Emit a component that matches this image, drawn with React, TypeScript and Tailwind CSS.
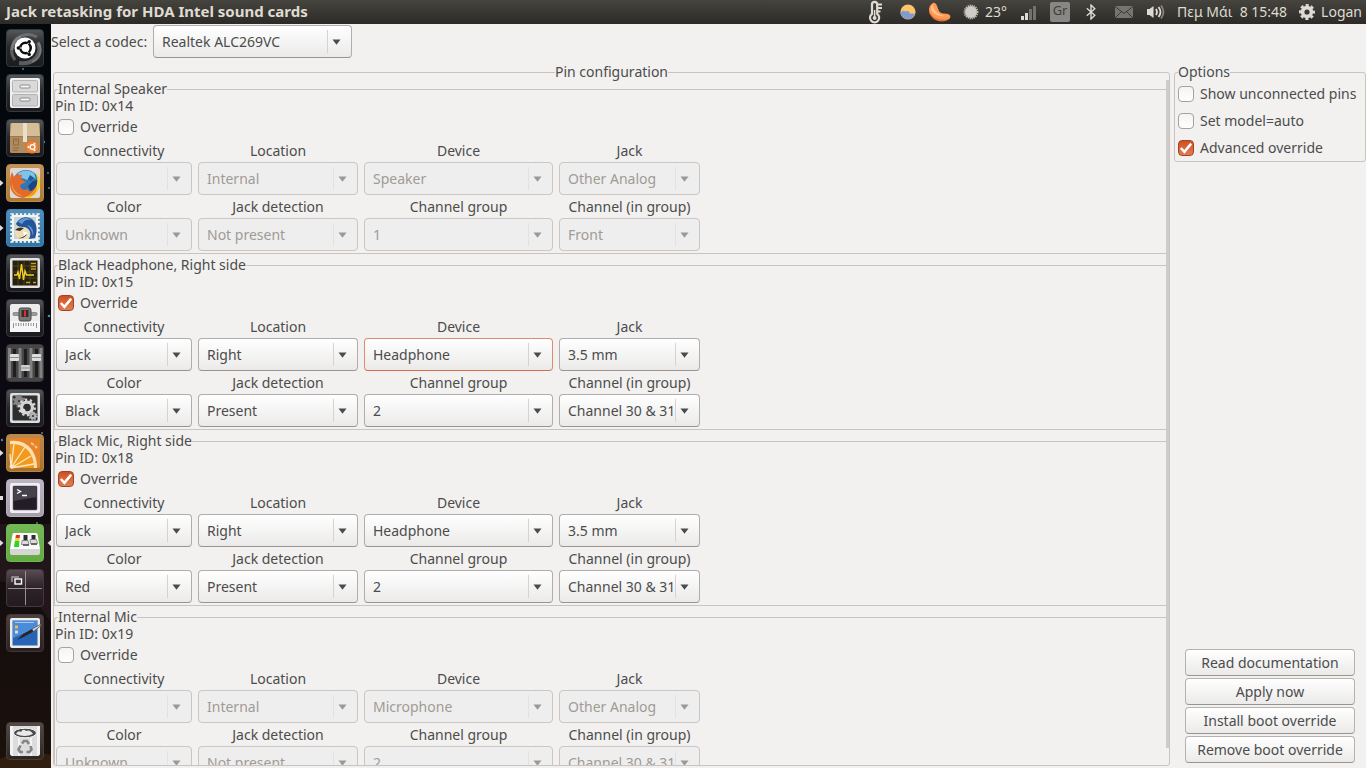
import React, { useState } from 'react';

type Pin = {
  id: string;
  name: string;
  override: boolean;
  values: string[]; // same order as FIELDS
};

const FIELDS = [
  { label: 'Connectivity', options: ['', 'Jack', 'Internal', 'Not connected'] },
  { label: 'Location', options: ['Internal', 'Right', 'Left', 'Front', 'Rear'] },
  { label: 'Device', options: ['Speaker', 'Headphone', 'Microphone', 'Line in', 'Line out'] },
  { label: 'Jack', options: ['Other Analog', '3.5 mm', 'Unknown'] },
  { label: 'Color', options: ['Unknown', 'Black', 'Red', 'Green', 'Blue'] },
  { label: 'Jack detection', options: ['Not present', 'Present'] },
  { label: 'Channel group', options: ['1', '2', '3', '4'] },
  { label: 'Channel (in group)', options: ['Front', 'Channel 30 & 31', 'Center/LFE', 'Back'] },
];

const PINS: Pin[] = [
  {
    id: '0x14',
    name: 'Internal Speaker',
    override: false,
    values: ['', 'Internal', 'Speaker', 'Other Analog', 'Unknown', 'Not present', '1', 'Front'],
  },
  {
    id: '0x15',
    name: 'Black Headphone, Right side',
    override: true,
    values: ['Jack', 'Right', 'Headphone', '3.5 mm', 'Black', 'Present', '2', 'Channel 30 & 31'],
  },
  {
    id: '0x18',
    name: 'Black Mic, Right side',
    override: true,
    values: ['Jack', 'Right', 'Headphone', '3.5 mm', 'Red', 'Present', '2', 'Channel 30 & 31'],
  },
  {
    id: '0x19',
    name: 'Internal Mic',
    override: false,
    values: ['', 'Internal', 'Microphone', 'Other Analog', 'Unknown', 'Not present', '2', 'Channel 30 & 31'],
  },
];

/* ---------- Controls ---------- */

const Combo: React.FC<{
  id: string;
  options: string[];
  value: string;
  disabled?: boolean;
  active?: boolean;
}> = ({ id, options, value, disabled, active }) => (
  <div className="relative h-[33px]">
    <select
      id={id}
      defaultValue={value}
      disabled={disabled}
      className={
        'block h-full w-full appearance-none rounded-[4px] border pl-2 pr-6 opacity-100 outline-none ' +
        (disabled
          ? 'border-[#c9c6c3] bg-[#eeeeee] text-[#a09b96]'
          : active
            ? 'border-[#e08b6c] border-b-[#cf6f4e] bg-linear-to-b from-white to-[#ebeae9] text-[#4c4c4c]'
            : 'border-[#b0adab] border-b-[#979492] bg-linear-to-b from-white to-[#ebeae9] text-[#4c4c4c]')
      }
    >
      {options.map((option) => (
        <option key={option}>{option}</option>
      ))}
    </select>
    <div
      className={
        'pointer-events-none absolute inset-y-[5px] right-0 flex w-[25px] items-center border-l pl-1 pt-px ' +
        (disabled ? 'border-[#e4e2e1] text-[#9c9893]' : 'border-[#d5d2d0] text-[#4c4c4c]')
      }
    >
      <svg width="9" height="6" viewBox="0 0 9 6">
        <path d="M.5.4h8L4.500 5.800z" fill="currentColor" />
      </svg>
    </div>
  </div>
);

const CheckBox: React.FC<{
  label: string;
  checked: boolean;
  onChange: (checked: boolean) => void;
}> = ({ label, checked, onChange }) => (
  <label className="flex items-center gap-1.5">
    <span className="relative size-4">
      <input
        type="checkbox"
        checked={checked}
        onChange={(e) => onChange(e.target.checked)}
        className="peer block size-4 appearance-none rounded-[4px] border border-[#a5a2a0] bg-linear-to-b from-[#f4f4f4] to-white checked:border-[#a8431f] checked:from-[#cf4f20] checked:to-[#e07c56]"
      />
      <svg
        className="pointer-events-none absolute inset-0 hidden peer-checked:block"
        width="16"
        height="16"
        viewBox="0 0 16 16"
      >
        <path d="M2.800 8l3.600 3.800L13.200 3.600" fill="none" stroke="#fff" strokeWidth="2.500" />
      </svg>
    </span>
    {label}
  </label>
);

const PinFrame: React.FC<{ pin: Pin }> = ({ pin }) => {
  const [override, setOverride] = useState<boolean>(pin.override);

  return (
    <fieldset className="mb-0.5 min-w-0 rounded-tl-[3px] border border-r-0 border-[#c8c4c1] pb-0.5">
      <legend className="ml-[3px] leading-[18px]">{pin.name}</legend>
      <p className="leading-4">Pin ID: {pin.id}</p>
      <div className="flex h-[25px] items-center pl-[3px]">
        <CheckBox label="Override" checked={override} onChange={setOverride} />
      </div>
      <div className="grid grid-cols-[136px_160px_189px_141px] gap-x-1.5 pl-px">
        {FIELDS.map((field, i) => {
          const id = `pin-${pin.id}-${i}`;
          return (
            <div key={id}>
              <label htmlFor={id} className="block text-center leading-[23px]">
                {field.label}
              </label>
              <Combo
                id={id}
                options={field.options}
                value={pin.values[i]}
                disabled={!override}
                active={pin.id === '0x15' && field.label === 'Device'}
              />
            </div>
          );
        })}
      </div>
    </fieldset>
  );
};

const PushButton: React.FC<{ children: React.ReactNode }> = ({ children }) => (
  <button
    type="button"
    className="h-[27px] rounded-[4px] border border-[#b5b2b0] border-b-[#979492] bg-linear-to-b from-white to-[#ebeae9] leading-none"
  >
    {children}
  </button>
);

/* ---------- Top panel ---------- */

const TopPanel = () => (
  <header className="flex h-6 items-center bg-linear-to-b from-[#45443e] to-[#2c2b28] pl-1.5 pr-1 text-[#dfdbd2]">
    <h1 className="pb-0.5 text-[15px] leading-5 font-bold">Jack retasking for HDA Intel sound cards</h1>
    <div className="ml-auto flex items-center">
      {/* thermometer */}
      <svg width="16" height="24" viewBox="0 0 16 24" fill="none">
        <path d="M4 4.500a2.600 2.600 0 0 1 5.200 0V14a4.600 4.600 0 1 1-5.200 0z" stroke="#dfdbd2" strokeWidth="2.200" />
        <path d="M6.600 10v8" stroke="#dfdbd2" strokeWidth="1.600" />
        <circle cx="6.600" cy="18" r="2" fill="#dfdbd2" />
        <path d="M10 4.500h4M10 8h4M10 11.500h2.500" stroke="#dfdbd2" strokeWidth="2" />
      </svg>
      {/* sun behind cloud */}
      <svg className="ml-4" width="16" height="16" viewBox="0 0 16 16">
        <circle cx="8" cy="8" r="7.600" fill="#fbc66b" />
        <path d="M.5 9.500C1 7 3.500 6 5.500 7.500 7.500 6 10 8 10.500 10c2-.8 3.500-.5 4.600 0A7.700 7.700 0 0 1 .5 9.500z" fill="#7f9bd0" />
      </svg>
      {/* clementine slice */}
      <svg className="ml-3" width="23" height="22" viewBox="0 0 23 22">
        <path d="M5 2C1 4 0 9 2 13c4 8 13 9 19 5 2-1 2-4-1-5-3-.5-7 0-9-3C10 8 9 4 8 3 7 2 6 1.500 5 2z" fill="#ff9850" />
        <path d="M5 3c0 6 5 12 15 12-5 1-15 0-17-7 0-2 1-4 2-5z" fill="#ffc091" />
        <path d="M1 9c2 8 10 11 20 9-6 4-15 2-19-5-1-1-1-3-1-4z" fill="#ef6a2c" />
      </svg>
      {/* weather */}
      <svg className="ml-3" width="16" height="16" viewBox="0 0 16 16">
        <circle cx="8" cy="8" r="6" fill="#cfccc6" />
        <circle cx="8" cy="8" r="6.400" fill="none" stroke="#c2bfb9" strokeWidth="2" strokeDasharray="1.200 .8" />
      </svg>
      <span className="ml-1.5 w-[22px] pb-0.5">23°</span>
      {/* signal */}
      <svg className="ml-3.5" width="15" height="15" viewBox="0 0 15 15">
        <path d="M0 11h3v4H0zM4 8h3v7H4z" fill="#dfdbd2" />
        <path d="M8 4h3v11H8zM12 1h3v14h-3z" fill="#74726c" />
      </svg>
      <span className="ml-3.5 flex size-5 items-center justify-center rounded-[2px] bg-[#888785] pb-0.5 text-[13px] text-[#403f3a]">
        Gr
      </span>
      {/* bluetooth */}
      <svg className="ml-4" width="10" height="16" viewBox="0 0 10 16" fill="none" stroke="#dfdbd2" strokeWidth="1.400">
        <path d="M.8 4.300l8 7L5 15V1l3.800 3.700-8 7" />
      </svg>
      {/* mail */}
      <svg className="ml-[19px]" width="18" height="12" viewBox="0 0 18 12">
        <path d="M0 0h18v12H0z" fill="#777571" />
        <path d="M0 .5l9 7 9-7M0 12l6.500-6.500M18 12l-6.500-6.500" fill="none" stroke="#3a3934" strokeWidth="1" />
      </svg>
      {/* volume */}
      <svg className="ml-3.5" width="18" height="16" viewBox="0 0 18 16" fill="none">
        <path d="M0 5h2.500L6.500 2v12l-4-3H0z" fill="#dfdbd2" />
        <path d="M9 5q2 3 0 6M11.500 3q4 5 0 10" stroke="#dfdbd2" strokeWidth="1.800" />
        <path d="M14 1.500q5 6.500 0 13" stroke="#8d8a84" strokeWidth="1.600" />
      </svg>
      <span className="ml-3 whitespace-pre pb-0.5">Πεμ Μάι  8 15:48</span>
      {/* session gear */}
      <svg className="ml-3" width="16" height="16" viewBox="0 0 16 16" fill="none" stroke="#dfdbd2">
        <circle cx="8" cy="8" r="4.400" strokeWidth="3.600" />
        <circle cx="8" cy="8" r="6.800" strokeWidth="2.400" strokeDasharray="3.100 2.240" strokeDashoffset="1.550" />
      </svg>
      <span className="ml-1.5 pb-0.5">Logan</span>
    </div>
  </header>
);

/* ---------- Launcher ---------- */

const DashIcon = () => (
  <>
    <g fill="none" stroke="#9a9a9a">
      <path d="M6 21C6 8 20 2 31 8" strokeWidth="3" opacity=".45" />
      <path d="M32 14c5 12-5 22-19 20" strokeWidth="4" opacity=".5" />
      <path d="M9 31C2 22 7 11 15 8" strokeWidth="3" opacity=".5" />
      <path d="M26 33c9-3 11-13 6-20" strokeWidth="2" opacity=".5" />
    </g>
    <circle cx="19" cy="19" r="10.500" fill="#fff" />
    <circle cx="19.500" cy="19" r="5.200" fill="none" stroke="#0c0c0c" strokeWidth="2.600" />
    <path d="M19.500 19L11 19M19.500 19l4.300-7.400M19.500 19l4.300 7.400" stroke="#fff" strokeWidth="1" />
    <circle cx="19.500" cy="19" r="3.600" fill="#fff" />
    <circle cx="12.300" cy="19" r="1.700" fill="#0c0c0c" />
    <circle cx="23.200" cy="12.600" r="1.700" fill="#0c0c0c" />
    <circle cx="23.200" cy="25.400" r="1.700" fill="#0c0c0c" />
  </>
);

const FilesIcon = () => (
  <>
    <rect x="4" y="4" width="30" height="30" rx="2" fill="#f0f0f0" />
    <rect x="6.500" y="6.500" width="25" height="11.500" rx="1" fill="#dadada" stroke="#b5b5b5" />
    <rect x="6.500" y="20.500" width="25" height="11.500" rx="1" fill="#cfcfcf" stroke="#b0b0b0" />
    <rect x="14" y="11" width="10" height="3" rx="1" fill="#f6f6f6" stroke="#8a8a8a" />
    <rect x="14" y="24" width="10" height="3" rx="1" fill="#f6f6f6" stroke="#8a8a8a" />
  </>
);

const SoftwareIcon = () => (
  <>
    <rect x="4" y="4" width="30" height="30" rx="1.500" fill="#b08b60" />
    <path d="M5.500 4h27L34 17H4z" fill="#d5bd98" />
    <path d="M4 17h30v1H4z" fill="#8f6f48" opacity=".6" />
    <path d="M17 4h4v19h-4z" fill="#ecdfc8" />
    <path d="M7.500 20h5v6h-5zM9 22h2M7 29h6M7 31.500h5" fill="none" stroke="#8d6a40" />
    <circle cx="26" cy="28" r="6.300" fill="#ee8436" stroke="#d66f26" strokeWidth=".6" />
    <circle cx="26.500" cy="28" r="2.400" fill="none" stroke="#fff" strokeWidth="1.300" />
    <circle cx="22.500" cy="28" r="1" fill="#fff" />
    <circle cx="28.500" cy="24.700" r="1" fill="#fff" />
    <circle cx="28.500" cy="31.300" r="1" fill="#fff" />
  </>
);

const FirefoxIcon = () => (
  <>
    <rect x="4" y="4" width="30" height="30" rx="2" fill="#dfd8d4" />
    <circle cx="20" cy="19.500" r="13.500" fill="#2f78b8" />
    <path d="M12 9q8-5 16 0l2 6-5-3-4 4-5-2-5 1z" fill="#7fc4e4" />
    <path d="M22 22l5-5 4-1v7l-6 6z" fill="#1a4585" />
    <path d="M24 11l4 3-3 3-3-2z" fill="#1f5a9e" />
    <path d="M6 8l2 5c2-3 5-3 8-2l-1 4 5 3-6 3c0 4 4 6 8 4 0 4 5 3 9-4 0 7-5 13-12 13C9 34 3 27 4 17c0-4 1-7 2-9z" fill="#e36a2a" />
    <path d="M6 18c0 6 4 12 11 14-8 0-12-7-11-14z" fill="#f4a04b" />
    <path d="M29 8c8 7 7 20-5 26H17c8-2 13-8 14-14 1-4 0-8-2-12z" fill="#f8d22e" />
    <path d="M20 33c6-2 9-6 11-11 0 7-4 11-11 11z" fill="#ee9222" />
  </>
);

const ThunderbirdIcon = () => (
  <>
    <rect x="6" y="6" width="26" height="26" fill="#f4f3ee" />
    <rect x="5.500" y="5.500" width="27" height="27" fill="none" stroke="#f4f3ee" strokeWidth="2.500" strokeDasharray="2.400 1.750" />
    <rect x="8" y="8" width="22" height="22" fill="#c6d6da" />
    <path d="M10 15C13 8 22 6 27 11c5 5 4 13 2 18l-6 1c3-6 1-11-5-12-3 0-6 0-8-3z" fill="#25539a" />
    <path d="M12 13c4-5 10-5 14-2-5-1-8 0-10 4zM21 16c5 1 7 6 6 11-1-5-3-8-6-11z" fill="#5c9bd4" />
    <path d="M9 20c3-3 8-3 12 0 4 3 4 8 0 10h-9c-2-3-4-7-3-10z" fill="#ecdcb8" />
    <path d="M9 21c3-3 6-3 9-2l-4 3zM12 29c4 0 7-2 9-5-1 4-4 6-9 5z" fill="#3a2e22" />
    <path d="M17 22l5 2-4 3z" fill="#fff" />
  </>
);

const MonitorIcon = () => (
  <>
    <rect x="4" y="4" width="30" height="30" rx="2" fill="#e4e3e0" />
    <rect x="6.500" y="6.500" width="25" height="25" fill="#262012" />
    <path d="M7 12h24M7 18h24M7 24h24M12 7v24M18 7v24M24 7v24" stroke="#6b5714" strokeWidth=".6" />
    <path d="M8 21h3l1-3 1.500 7 2-15 2 16 1.500-9 1.500 4H28" fill="none" stroke="#f1cf26" strokeWidth="1.400" />
    <path d="M25 9.500h5M25 12.500h5M25 15h5M20 28.500h4M27 28.500h3" stroke="#c99c22" strokeWidth="1.400" />
  </>
);

const DimmerIcon = () => (
  <>
    <rect x="4" y="5" width="30" height="28" rx="2" fill="#ececec" />
    <path d="M4 22h30v11H4z" fill="#f6f6f6" />
    <rect x="7" y="13.500" width="24" height="3" rx="1" fill="#9c9c9c" stroke="#757575" strokeWidth=".7" />
    <rect x="13" y="9" width="12" height="13" rx="2" fill="#777" stroke="#4b4b4b" />
    <rect x="15.500" y="11" width="7" height="7" fill="#2f2f2f" />
    <path d="M19 11.500v6" stroke="#e02d2d" strokeWidth="2" />
    <path d="M7.500 24v5M10 24v3M12.500 24v3M15 24v3M17.500 24v3M20 24v3M22.500 24v3M25 24v3M27.500 24v3M30.500 24v5" stroke="#8a8a8a" strokeWidth=".9" />
  </>
);

const MixerIcon = () => (
  <>
    <rect x="1" y="1" width="36" height="36" rx="3" fill="#474747" />
    <path d="M14 4v30M25 4v30M3.500 4v30M35 4v30" stroke="#9b9b9b" strokeWidth="3" opacity=".7" />
    <path d="M8.500 5v28M19.500 5v28M30.500 5v28" stroke="#1e1e1e" strokeWidth="3" />
    <rect x="4" y="10" width="9" height="7" rx="1" fill="#dedede" />
    <rect x="15" y="21" width="9" height="6" rx="1" fill="#cfcfcf" />
    <rect x="26" y="10" width="9" height="7" rx="1" fill="#dedede" />
    <path d="M4 13.500h9M15 24h9M26 13.500h9" stroke="#8b8b8b" strokeWidth="1" />
  </>
);

const SettingsIcon = () => (
  <>
    <rect x="4" y="4" width="30" height="30" rx="2" fill="#dedede" />
    <rect x="6.500" y="6.500" width="25" height="25" rx="1" fill="#2e2e2e" />
    <g fill="none">
      <circle cx="13" cy="12" r="3" strokeWidth="4" stroke="#858585" />
      <circle cx="13" cy="12" r="5.500" strokeWidth="2" strokeDasharray="2.200 2.120" stroke="#858585" />
      <circle cx="21" cy="18.500" r="5.400" strokeWidth="3.200" stroke="#d4d4d4" />
      <circle cx="21" cy="18.500" r="7.700" strokeWidth="2.600" strokeDasharray="2.400 2.440" stroke="#d4d4d4" />
      <circle cx="27" cy="27" r="2.200" strokeWidth="2.400" stroke="#b0b0b0" />
      <circle cx="27" cy="27" r="3.800" strokeWidth="1.600" strokeDasharray="1.500 1.480" stroke="#b0b0b0" />
    </g>
    <circle cx="17" cy="22" r="2.500" fill="#dcdcdc" />
  </>
);

const ClementineIcon = () => (
  <>
    <rect x="4" y="4" width="30" height="30" rx="1.500" fill="#e8832a" />
    <path d="M4 7c17-2 27 10 27 27H4z" fill="#fce0b0" />
    <path d="M4 10c15-1 24 9 24 24H4z" fill="#f39a1e" />
    <path d="M5 34L8 10M5 34L19 13M5 34l20-12M5 34l23-4M5 34L4 20" stroke="#fde8c4" strokeWidth="1.300" />
    <circle cx="5.500" cy="32.500" r="2" fill="#fde8c4" />
    <path d="M25 9l3 2M29 12l2 2" stroke="#fbc888" strokeWidth="2" />
  </>
);

const TerminalIcon = () => (
  <>
    <rect x="4" y="4" width="30" height="30" rx="2" fill="#f1eff4" />
    <rect x="7" y="7" width="24" height="24" rx="1" fill="#231d2a" stroke="#6d6874" strokeWidth=".6" />
    <path d="M7.500 7.500h23V18L7.500 22z" fill="#45424c" />
    <path d="M11 10.500l3.500 2-3.500 2M16 16.500h5" fill="none" stroke="#fff" strokeWidth="1.400" />
  </>
);

const RetaskIcon = () => (
  <>
    <path d="M8 9h22q1 0 1.500 1L34 25H4L6.500 10Q7 9 8 9z" fill="#fbfbfb" />
    <path d="M4 25h30v4q0 2-2 2H6q-2 0-2-2z" fill="#d6d6d6" />
    <path d="M10 11h4l-.3 3H9.400z" fill="#ea2f2a" />
    <path d="M9.400 14h4.300l-.3 3H8.900z" fill="#f2d22a" />
    <path d="M8.900 17h4.500l-.4 6H8z" fill="#2ed32a" />
    <path d="M17.500 11h4v8h-4zM25.500 11h4v8h-4z" fill="#2d2d2d" />
    <path d="M16 16.500h6l1 4h-7.500zM24 15.500h6.500l1 4H24.500z" fill="#dcdcdc" stroke="#777" strokeWidth=".8" />
    <path d="M17 20h6v2h-6zM25 19h6v2h-6z" fill="#666" />
  </>
);

const WorkspaceIcon = () => (
  <>
    <path d="M19.500 2v34M2 19.500h34" stroke="#988f94" strokeWidth="1" />
    <path d="M6 13V8h7" fill="none" stroke="#a59ca1" strokeWidth="1.500" />
    <rect x="9" y="10" width="6.500" height="5" fill="none" stroke="#fff" strokeWidth="1.400" />
  </>
);

const DisplayIcon = () => (
  <>
    <rect x="4" y="4" width="30" height="30" rx="2" fill="#ececec" />
    <rect x="6.500" y="6.500" width="25" height="25" fill="#2964b4" />
    <path d="M7 7h24v7L7 24z" fill="#4a8cda" />
    <path d="M9 8.500h19" stroke="#a8cbf0" strokeWidth="1" />
    <path d="M9 11.500h3v3H9z" fill="#f0b949" />
    <path d="M9 16.500h3v3H9z" fill="#e3d9d2" />
    <path d="M11 26l6-6 9-5 1.500 2.500-9 5z" fill="#262626" />
    <path d="M26 15l9-5-.5 2-7 5.500z" fill="#d6d6d6" stroke="#555" strokeWidth=".8" />
  </>
);

const TrashIcon = () => (
  <>
    <path d="M4 4h30v27q0 3-3 3H7q-3 0-3-3z" fill="#dcdcdc" />
    <path d="M4 4h3v30H6q-2-1-2-3zM31 4h3v27q0 2-2 3h-1zM12 16h2v18h-2zM24 16h2v18h-2z" fill="#f3f3f3" />
    <ellipse cx="19" cy="11" rx="11.500" ry="4.800" fill="#4b4b4b" stroke="#f8f8f8" />
    <path d="M10 12q2-4 5-2 2-4 5-1 4-2 7 3-8 4-17 0z" fill="#e9e9e9" />
    <g fill="none" stroke="#858585" strokeWidth="2.600">
      <path d="M16 21.500l2-2.500h3l2 3M24.500 24l1 3.500-2 2.500h-3M17 30h-3l-1.500-2.500 2-4" />
    </g>
  </>
);

const DARK_TILE = 'bg-linear-to-b from-[#54575a] via-[#25272a] to-[#1a1c1f] border-[#36383b]';

const LAUNCHER = [
  { name: 'Dash', icon: DashIcon, tile: DARK_TILE },
  { name: 'Files', icon: FilesIcon, tile: DARK_TILE },
  { name: 'Software Center', icon: SoftwareIcon, tile: DARK_TILE },
  { name: 'Firefox', icon: FirefoxIcon, tile: 'bg-linear-to-b from-[#c2935a] to-[#ac7935] border-[#bd8c4c]', running: true },
  { name: 'Thunderbird', icon: ThunderbirdIcon, tile: 'bg-linear-to-b from-[#4f8fbe] to-[#2f76a6] border-[#4286b6]', running: true },
  { name: 'System Monitor', icon: MonitorIcon, tile: DARK_TILE },
  { name: 'Dimmer', icon: DimmerIcon, tile: DARK_TILE },
  { name: 'Mixer', icon: MixerIcon, tile: DARK_TILE },
  { name: 'System Settings', icon: SettingsIcon, tile: DARK_TILE },
  { name: 'Clementine', icon: ClementineIcon, tile: 'bg-linear-to-b from-[#b88a4e] to-[#a8722c] border-[#b98743]', running: true },
  { name: 'Terminal', icon: TerminalIcon, tile: 'bg-linear-to-b from-[#b9b5c1] to-[#a39fac] border-[#b7b2bf]', running: true },
  { name: 'Jack Retask', icon: RetaskIcon, tile: 'bg-linear-to-b from-[#74b855] to-[#62ab41] border-[#72b553]', running: true, focused: true },
  { name: 'Workspaces', icon: WorkspaceIcon, tile: 'bg-linear-to-b from-[#5a4c53] via-[#2d2228] to-[#241b20] border-[#42383e]' },
  { name: 'Display', icon: DisplayIcon, tile: 'bg-linear-to-b from-[#4c4140] to-[#2a2120] border-[#3f3635]' },
  { name: 'Trash', icon: TrashIcon, tile: 'bg-linear-to-b from-[#534b47] to-[#2e2622] border-[#453d39]', bottom: true },
];

const Launcher = () => (
  <nav className="relative flex w-[51px] shrink-0 flex-col gap-[7px] bg-linear-to-b from-[#02080c] via-[#0d0910] to-[#1b110b] pt-[5px] pb-2">
    {/* wallpaper stars showing through */}
    <svg className="absolute inset-0" width="51" height="744" viewBox="0 0 51 744">
      <g fill="#4d8799">
        <circle cx="23" cy="45" r="1" />
        <circle cx="44" cy="118" r="1.200" />
        <circle cx="48" cy="149" r="1" />
        <circle cx="49" cy="164" r="1" />
        <circle cx="49" cy="292" r="1.300" />
        <circle cx="2" cy="416" r="1.200" />
        <circle cx="42" cy="409" r="1" />
        <circle cx="37" cy="499" r="1" />
      </g>
      <path d="M0 500v57l25 5 26 36V500z" fill="#33212b" opacity=".45" />
      <path d="M0 735q25-12 51-4v13H0z" fill="#4a2c14" opacity=".5" />
    </svg>
    {LAUNCHER.map((item) => {
      const Icon = item.icon;
      return (
        <div key={item.name} className={item.bottom ? 'relative mt-auto flex pl-1.5' : 'relative flex pl-1.5'}>
          {item.running && (
            <svg className="absolute left-0 top-[15px]" width="4" height="8" viewBox="0 0 4 8">
              {item.name === 'Terminal' ? (
                <path d="M0 2h3v4H0z" fill="#ddd" />
              ) : (
                <path d="M0 1v6l3.500-3z" fill="#ddd" />
              )}
            </svg>
          )}
          <button
            type="button"
            aria-label={item.name}
            className={'size-[38px] overflow-hidden rounded-[4px] border ' + item.tile}
          >
            <svg className="-m-px" width="38" height="38" viewBox="0 0 38 38">
              <Icon />
            </svg>
          </button>
          {item.focused && (
            <svg className="absolute right-0 top-[15px]" width="4" height="8" viewBox="0 0 4 8">
              <path d="M4 1v6L.5 4z" fill="#ddd" />
            </svg>
          )}
        </div>
      );
    })}
  </nav>
);

/* ---------- App ---------- */

const App = () => {
  const [showUnconnected, setShowUnconnected] = useState<boolean>(false);
  const [modelAuto, setModelAuto] = useState<boolean>(false);
  const [advanced, setAdvanced] = useState<boolean>(true);

  return (
    <div className="flex h-screen flex-col overflow-hidden bg-[#f2f1f0] font-['Noto_Sans','Open_Sans',sans-serif] text-[14px] text-[#4c4c4c]">
      <TopPanel />
      <div className="flex min-h-0 flex-1">
        <Launcher />
        <main className="flex min-w-0 flex-1 flex-col">
          <div className="flex h-10 items-start gap-[3px] pt-px">
            <label htmlFor="codec" className="w-[99px] whitespace-nowrap leading-[33px]">
              Select a codec:
            </label>
            <div className="w-[199px]">
              <Combo id="codec" options={['Realtek ALC269VC', 'Intel PantherPoint HDMI']} value="Realtek ALC269VC" />
            </div>
          </div>

          <div className="flex min-h-0 flex-1 gap-1 pl-0.5">
            <fieldset className="mb-0.5 flex min-w-0 flex-1 flex-col rounded-[3px] border border-[#c8c4c1]">
              <legend className="mx-auto leading-4">Pin configuration</legend>
              <div className="flex min-h-0 flex-1">
                <div className="min-w-0 flex-1 overflow-hidden">
                  {PINS.map((pin) => (
                    <PinFrame key={pin.id} pin={pin} />
                  ))}
                </div>
                {/* overlay scrollbar thumb */}
                <div className="mb-[17px] w-[3px] bg-[#d0cbc8]" />
              </div>
            </fieldset>

            <aside className="flex w-48 shrink-0 flex-col">
              <fieldset className="rounded-[3px] border border-[#c8c4c1]">
                <legend className="ml-[3px] leading-4">Options</legend>
                <div className="grid auto-rows-[27px] items-center pl-[3px] whitespace-nowrap">
                  <CheckBox label="Show unconnected pins" checked={showUnconnected} onChange={setShowUnconnected} />
                  <CheckBox label="Set model=auto" checked={modelAuto} onChange={setModelAuto} />
                  <CheckBox label="Advanced override" checked={advanced} onChange={setAdvanced} />
                </div>
              </fieldset>
              <div className="mt-auto flex flex-col gap-0.5 px-[11px] pb-[5px]">
                <PushButton>Read documentation</PushButton>
                <PushButton>Apply now</PushButton>
                <PushButton>Install boot override</PushButton>
                <PushButton>Remove boot override</PushButton>
              </div>
            </aside>
          </div>
        </main>
      </div>
    </div>
  );
};

export default App;
